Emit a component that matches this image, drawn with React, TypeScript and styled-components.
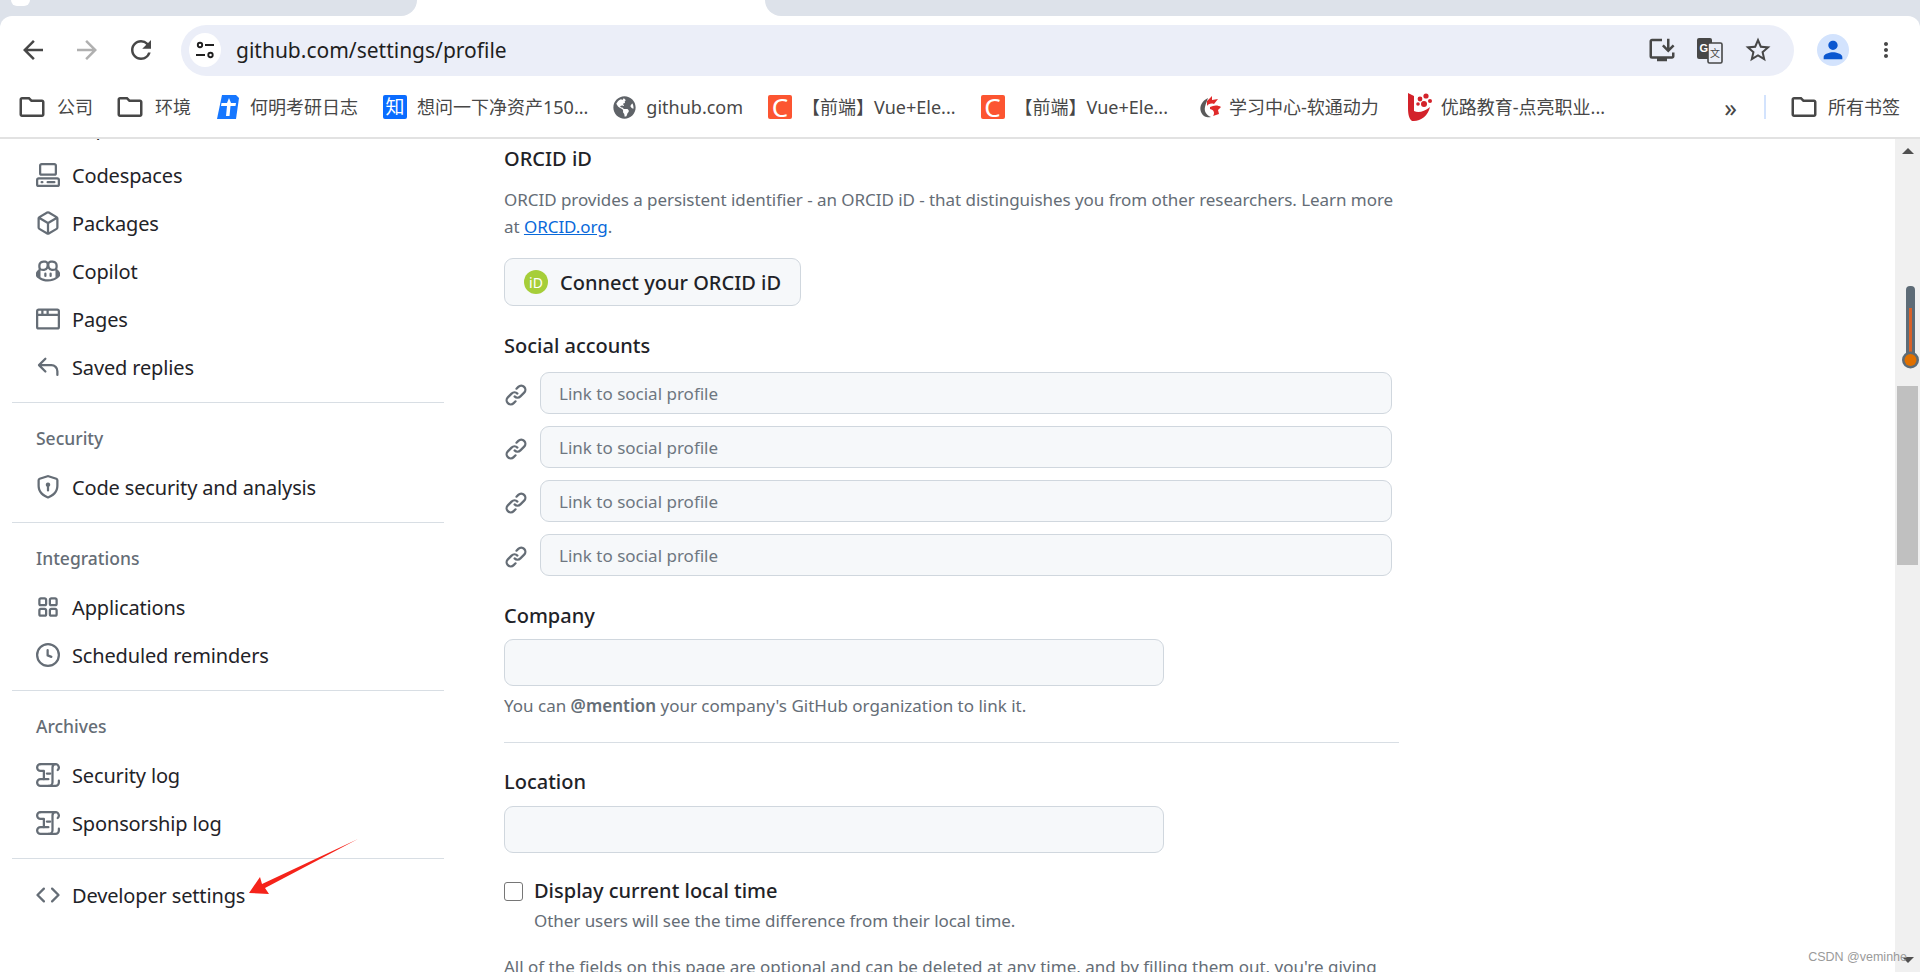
import React from 'react';
import styled, { createGlobalStyle } from 'styled-components';
import { GoRepo } from 'react-icons/go';
import {
     MdArrowBack,
     MdArrowForward,
     MdInstallDesktop,
     MdMoreVert,
     MdOutlineFolder,
     MdPerson,
     MdRefresh,
     MdStarBorder,
} from 'react-icons/md';
import { FaGlobeAmericas } from 'react-icons/fa';

const FONT = `'Noto Sans', 'Noto Sans CJK SC', sans-serif`;

const GlobalStyle = createGlobalStyle`
     html, body {
          margin: 0;
          padding: 0;
          background: #fff;
          overflow: hidden;
     }

     * {
          box-sizing: border-box;
     }

     body {
          font-family: ${FONT};
     }
`;

const Page = styled.div`
     position: relative;
     display: flex;
     flex-direction: column;
     width: 1920px;
     height: 972px;
     overflow: hidden;
`;

/* browser chrome */
const TabStrip = styled.div`
     display: flex;
     height: 16px;
     background: #fff;
`;

const TabGap = styled.div<{ $side: 'left' | 'right' }>`
     background: #dde2ea;
     ${({ $side }) =>
          $side === 'left'
               ? 'width: 417px; border-bottom-right-radius: 18px;'
               : 'flex: 1; margin-left: 348px; border-bottom-left-radius: 18px;'}
`;

const TabSliver = styled.div`
     width: 19px;
     height: 6px;
     margin-left: 11px;
     background: #fff;
     border-radius: 0 0 8px 8px;
`;

const ToolbarBack = styled.div`
     background: linear-gradient(90deg, #dde2ea 20px, transparent 20px, transparent 1890px, #dde2ea 1890px);
`;

const Toolbar = styled.div`
     display: flex;
     align-items: center;
     height: 68px;
     padding: 0 22px 0 6px;
     background: #fff;
     border-radius: 12px 12px 0 0;
`;

const NavButton = styled.div<{ $muted?: boolean }>`
     display: flex;
     align-items: center;
     justify-content: center;
     width: 54px;
     font-size: 30px;
     color: ${({ $muted }) => ($muted ? '#b0b0b0' : '#474747')};
`;

const AddressBar = styled.div`
     flex: 1;
     display: flex;
     align-items: center;
     gap: 15px;
     height: 51px;
     margin-left: 13px;
     padding: 0 21px 0 8px;
     background: #ebeef8;
     border-radius: 26px;
`;

const SiteChip = styled.div`
     display: flex;
     align-items: center;
     justify-content: center;
     width: 32px;
     height: 34px;
     border-radius: 50%;
     background: #fff;
     color: #1f1f1f;
`;

const Url = styled.span`
     flex: 1;
     font-size: 21px;
     color: #1f1f1f;
`;

const AddressActions = styled.div`
     display: flex;
     align-items: center;
     gap: 18px;
     font-size: 30px;
     color: #474747;

     svg {
          display: block;
     }
`;

const Avatar = styled.div`
     display: flex;
     align-items: center;
     justify-content: center;
     width: 32px;
     height: 32px;
     margin: 0 25px 0 23px;
     border-radius: 50%;
     background: #d3e3fd;
     font-size: 28px;
     color: #0b57d0;
`;

const MoreButton = styled.div`
     display: flex;
     justify-content: center;
     width: 24px;
     font-size: 30px;
     color: #474747;
`;

const BookmarkBar = styled.div`
     display: flex;
     align-items: center;
     gap: 25px;
     height: 55px;
     padding: 0 20px 7px 20px;
     background: #fff;
     border-bottom: 2px solid #e2e2e2;
`;

const Bookmark = styled.div<{ $iconGap?: number; $lead?: number }>`
     display: flex;
     align-items: center;
     gap: ${({ $iconGap }) => $iconGap ?? 10}px;
     margin-left: ${({ $lead }) => $lead ?? 0}px;
     font-size: 18px;
     line-height: 24px;
     color: #474747;
     white-space: nowrap;

     svg {
          display: block;
          flex: none;
     }
`;

const FolderIcon = styled(MdOutlineFolder)`
     font-size: 30px;
     margin: 0 -1px 0 -3px;
     color: #474747;
`;

const Favicon = styled.span<{ $bg: string; $size: number }>`
     display: flex;
     align-items: center;
     justify-content: center;
     width: 24px;
     height: 24px;
     border-radius: 2px;
     background: ${({ $bg }) => $bg};
     color: #fff;
     font-size: ${({ $size }) => $size}px;
     line-height: 1;
`;

const BookmarkEnd = styled.div`
     display: flex;
     align-items: center;
     margin-left: auto;
`;

const Chevrons = styled.span`
     font-size: 25px;
     line-height: 24px;
     color: #474747;
     margin-right: 27px;
`;

const BarDivider = styled.span`
     width: 2px;
     height: 24px;
     margin-right: 26px;
     background: #d3e3fd;
`;

/* page */
const Main = styled.div`
     flex: 1;
     display: flex;
     min-height: 0;
     overflow: hidden;
`;

const Sidebar = styled.nav`
     flex: none;
     width: 432px;
     margin: -35px 0 0 12px;
`;

const NavRow = styled.div`
     display: flex;
     align-items: center;
     gap: 12px;
     height: 48px;
     padding: 0 0 2px 24px;
     font-size: 20px;
     letter-spacing: -0.15px;
     color: #1f2328;

     svg {
          flex: none;
          width: 24px;
          height: 24px;
          color: #656d76;
     }
`;

const NavDivider = styled.div`
     height: 1px;
     margin-top: 10px;
     background: #d8dee4;
`;

const NavLabel = styled.div`
     padding: 22px 0 12px 24px;
     font-size: 17.5px;
     font-weight: 500;
     line-height: 27px;
     color: #656d76;
`;

const DevGroup = styled.div`
     margin-top: 13px;
`;

const Form = styled.div`
     flex: none;
     width: 895px;
     margin-left: 60px;
     padding-top: 5px;
`;

const FieldTitle = styled.div<{ $gap?: number }>`
     margin-top: ${({ $gap }) => $gap ?? 0}px;
     font-size: 20px;
     font-weight: 500;
     line-height: 30px;
     color: #1f2328;
`;

const Note = styled.p<{ $gap?: number; $tight?: boolean }>`
     margin: ${({ $gap }) => $gap ?? 0}px 0 0;
     font-size: 17px;
     line-height: 27px;
     letter-spacing: ${({ $tight }) => ($tight ? '-0.05px' : '0')};
     color: #656d76;
     white-space: nowrap;

     a {
          color: #0969da;
          text-decoration: underline;
     }

     strong {
          font-weight: 600;
     }
`;

const OrcidButton = styled.button`
     display: flex;
     align-items: center;
     gap: 12px;
     width: 297px;
     height: 48px;
     margin-top: 18px;
     padding: 0 0 0 19px;
     border: 1.5px solid #d0d7de;
     border-radius: 9px;
     background: #f6f8fa;
     font-family: ${FONT};
     font-size: 20px;
     font-weight: 500;
     color: #1f2328;
`;

const OrcidBadge = styled.span`
     display: flex;
     align-items: center;
     justify-content: center;
     width: 24px;
     height: 24px;
     border-radius: 50%;
     background: #a6ce39;
     color: #fff;
     font-size: 14px;
     font-weight: 400;
`;

const SocialList = styled.div`
     display: flex;
     flex-direction: column;
     gap: 12px;
     width: 888px;
     margin-top: 11px;
`;

const SocialRow = styled.div`
     display: flex;
     align-items: center;
     gap: 12px;

     svg {
          flex: none;
          width: 24px;
          height: 24px;
          margin-top: 3px;
          color: #656d76;
     }
`;

const TextInput = styled.input`
     display: block;
     flex: 1;
     height: 42px;
     padding: 0 18px;
     border: 1.5px solid #d0d7de;
     border-radius: 9px;
     background: #f6f8fa;
     font-family: ${FONT};
     font-size: 17px;

     &::placeholder {
          color: #6e7781;
          opacity: 1;
     }
`;

const WideInput = styled(TextInput)<{ $gap: number }>`
     width: 660px;
     height: 47px;
     margin-top: ${({ $gap }) => $gap}px;
`;

const Rule = styled.hr`
     width: 895px;
     height: 1px;
     margin: 23px 0 0;
     border: 0;
     background: #d8dee4;
`;

const CheckRow = styled.label`
     display: flex;
     align-items: center;
     gap: 11px;
     margin-top: 23px;
     font-size: 20px;
     font-weight: 500;
     line-height: 30px;
     color: #1f2328;
`;

const CheckBox = styled.input`
     appearance: none;
     width: 19px;
     height: 19px;
     margin: 0;
     border: 1.5px solid #767676;
     border-radius: 3px;
     background: #fff;
`;

const Indented = styled(Note)`
     padding-left: 30px;
`;

/* page scrollbar */
const ScrollTrack = styled.div`
     position: relative;
     flex: none;
     display: flex;
     flex-direction: column;
     align-items: center;
     width: 25px;
     margin-left: auto;
     background: #f0f0f0;
`;

const ScrollArrow = styled.span<{ $dir: 'up' | 'down' }>`
     width: 0;
     height: 0;
     border-left: 6px solid transparent;
     border-right: 6px solid transparent;
     ${({ $dir }) =>
          $dir === 'up'
               ? 'margin-top: 9px; border-bottom: 6px solid #505050;'
               : 'margin-top: 392px; border-top: 6px solid #505050;'}
`;

const ScrollThumb = styled.div`
     width: 21px;
     height: 179px;
     margin-top: 232px;
     background: #c0c0c0;
`;

const Thermometer = styled.svg`
     position: absolute;
     top: 147px;
     left: 6px;
`;

const Annotation = styled.svg`
     position: absolute;
     left: 240px;
     top: 830px;
`;

const Watermark = styled.span`
     position: absolute;
     right: 13px;
     bottom: 8px;
     font-family: 'Liberation Sans', sans-serif;
     font-size: 12.5px;
     color: #9a9a9a;
`;

// octicons, 16px artwork (the 16px strokes are heavier than what react-icons/go ships)
const Octicon: React.FC<{ d: string | string[] }> = ({ d }) => (
     <svg viewBox='0 0 16 16' fill='currentColor'>
          {([] as string[]).concat(d).map((p) => (
               <path key={p} d={p} />
          ))}
     </svg>
);

const ICONS = {
     codespaces: [
          'M0 11.25c0-.966.784-1.75 1.75-1.75h12.5c.966 0 1.75.784 1.75 1.75v3A1.75 1.75 0 0 1 14.25 16H1.75A1.75 1.75 0 0 1 0 14.25Zm2-9.5C2 .784 2.784 0 3.75 0h8.5C13.216 0 14 .784 14 1.75v5a1.75 1.75 0 0 1-1.75 1.75h-8.5A1.75 1.75 0 0 1 2 6.75Zm1.75-.25a.25.25 0 0 0-.25.25v5c0 .138.112.25.25.25h8.5a.25.25 0 0 0 .25-.25v-5a.25.25 0 0 0-.25-.25Zm-2 9.5a.25.25 0 0 0-.25.25v3c0 .138.112.25.25.25h12.5a.25.25 0 0 0 .25-.25v-3a.25.25 0 0 0-.25-.25Z',
          'M7 12.75a.75.75 0 0 1 .75-.75h4.5a.75.75 0 0 1 0 1.5h-4.5a.75.75 0 0 1-.75-.75Zm-4 0a.75.75 0 0 1 .75-.75h.5a.75.75 0 0 1 0 1.5h-.5a.75.75 0 0 1-.75-.75Z',
     ],
     packages:
          'm8.878.392 5.25 3.045c.54.314.872.89.872 1.514v6.098a1.75 1.75 0 0 1-.872 1.514l-5.25 3.045a1.75 1.75 0 0 1-1.756 0l-5.25-3.045A1.75 1.75 0 0 1 1 11.049V4.951c0-.624.332-1.201.872-1.514L7.122.392a1.75 1.75 0 0 1 1.756 0ZM7.875 1.69l-4.63 2.685L8 7.133l4.755-2.758-4.63-2.685a.248.248 0 0 0-.25 0ZM2.5 5.677v5.372c0 .09.047.171.125.216l4.625 2.683V8.432Zm6.25 8.271 4.625-2.683a.25.25 0 0 0 .125-.216V5.677L8.75 8.432Z',
     copilot: [
          'M7.998 15.035c-4.562 0-7.873-2.914-7.998-3.749V9.338c.085-.628.677-1.686 1.588-2.065.013-.07.024-.143.036-.218.029-.183.06-.384.126-.612-.201-.508-.254-1.084-.254-1.656 0-.87.128-1.769.693-2.484.579-.733 1.494-1.124 2.724-1.261 1.206-.134 2.262.034 2.944.765.05.053.096.108.139.165.044-.057.094-.112.143-.165.682-.731 1.738-.899 2.944-.765 1.23.137 2.145.528 2.724 1.261.566.715.693 1.614.693 2.484 0 .572-.053 1.148-.254 1.656.066.228.098.429.126.612.012.076.024.148.037.218.924.385 1.522 1.471 1.591 2.095v1.872c0 .766-3.351 3.795-8.002 3.795Zm0-1.485c2.28 0 4.584-1.11 5.002-1.433V7.862l-.023-.116c-.49.21-1.075.291-1.727.291-1.146 0-2.059-.327-2.71-.991A3.222 3.222 0 0 1 8 6.303a3.24 3.24 0 0 1-.544.743c-.65.664-1.563.991-2.71.991-.652 0-1.236-.081-1.727-.291l-.023.116v4.255c.419.323 2.722 1.433 5.002 1.433ZM6.762 2.83c-.193-.206-.637-.413-1.682-.297-1.019.113-1.479.404-1.713.7-.247.312-.369.789-.369 1.554 0 .793.129 1.171.308 1.371.162.181.519.379 1.442.379.853 0 1.339-.235 1.638-.54.315-.322.527-.827.617-1.553.117-.935-.037-1.395-.241-1.614Zm4.155-.297c-1.044-.116-1.488.091-1.681.297-.204.219-.359.679-.242 1.614.091.726.303 1.231.618 1.553.299.305.784.54 1.638.54.922 0 1.28-.198 1.442-.379.179-.2.308-.578.308-1.371 0-.765-.123-1.242-.37-1.554-.233-.296-.693-.587-1.713-.7Z',
          'M6.25 9.037a.75.75 0 0 1 .75.75v1.501a.75.75 0 0 1-1.5 0V9.787a.75.75 0 0 1 .75-.75Zm4.25.75v1.501a.75.75 0 0 1-1.5 0V9.787a.75.75 0 0 1 1.5 0Z',
     ],
     browser:
          'M0 2.75C0 1.784.784 1 1.75 1h12.5c.966 0 1.75.784 1.75 1.75v10.5A1.75 1.75 0 0 1 14.25 15H1.75A1.75 1.75 0 0 1 0 13.25ZM14.5 6h-13v7.25c0 .138.112.25.25.25h12.5a.25.25 0 0 0 .25-.25Zm-6-3.5v2h6v-1.75a.25.25 0 0 0-.25-.25ZM5 2.5v2h2v-2Zm-3.25 0a.25.25 0 0 0-.25.25V4.5h2v-2Z',
     reply: 'M6.78 1.97a.75.75 0 0 1 0 1.06L3.81 6h6.44A4.75 4.75 0 0 1 15 10.75v2.5a.75.75 0 0 1-1.5 0v-2.5a3.25 3.25 0 0 0-3.25-3.25H3.81l2.97 2.97a.749.749 0 0 1-.326 1.275.749.749 0 0 1-.734-.215L1.47 7.28a.75.75 0 0 1 0-1.06l4.25-4.25a.75.75 0 0 1 1.06 0Z',
     shield: 'm8.533.133 5.25 1.68A1.75 1.75 0 0 1 15 3.48V7c0 1.566-.32 3.182-1.303 4.682-.983 1.498-2.585 2.813-5.032 3.855a1.697 1.697 0 0 1-1.33 0c-2.447-1.042-4.049-2.357-5.032-3.855C1.32 10.182 1 8.566 1 7V3.48a1.75 1.75 0 0 1 1.217-1.667l5.25-1.68a1.748 1.748 0 0 1 1.066 0Zm-.61 1.429.001.001-5.25 1.68a.251.251 0 0 0-.174.237V7c0 1.36.275 2.666 1.057 3.859.784 1.194 2.121 2.342 4.366 3.298a.196.196 0 0 0 .154 0c2.245-.957 3.582-2.103 4.366-3.297C13.225 9.666 13.5 8.358 13.5 7V3.48a.25.25 0 0 0-.174-.238l-5.25-1.68a.25.25 0 0 0-.153 0ZM9.5 6.5c0 .536-.286 1.032-.75 1.3v2.45a.75.75 0 0 1-1.5 0V7.8A1.5 1.5 0 1 1 9.5 6.5Z',
     apps: 'M1.5 3.25c0-.966.784-1.75 1.75-1.75h2.5c.966 0 1.75.784 1.75 1.75v2.5A1.75 1.75 0 0 1 5.75 7.5h-2.5A1.75 1.75 0 0 1 1.5 5.75Zm7 0c0-.966.784-1.75 1.75-1.75h2.5c.966 0 1.75.784 1.75 1.75v2.5a1.75 1.75 0 0 1-1.75 1.75h-2.5A1.75 1.75 0 0 1 8.5 5.75Zm-7 7c0-.966.784-1.75 1.75-1.75h2.5c.966 0 1.75.784 1.75 1.75v2.5a1.75 1.75 0 0 1-1.75 1.75h-2.5a1.75 1.75 0 0 1-1.75-1.75Zm7 0c0-.966.784-1.75 1.75-1.75h2.5c.966 0 1.75.784 1.75 1.75v2.5a1.75 1.75 0 0 1-1.75 1.75h-2.5a1.75 1.75 0 0 1-1.75-1.75ZM3.25 3a.25.25 0 0 0-.25.25v2.5c0 .138.112.25.25.25h2.5A.25.25 0 0 0 6 5.75v-2.5A.25.25 0 0 0 5.75 3Zm7 0a.25.25 0 0 0-.25.25v2.5c0 .138.112.25.25.25h2.5a.25.25 0 0 0 .25-.25v-2.5a.25.25 0 0 0-.25-.25Zm-7 7a.25.25 0 0 0-.25.25v2.5c0 .138.112.25.25.25h2.5a.25.25 0 0 0 .25-.25v-2.5a.25.25 0 0 0-.25-.25Zm7 0a.25.25 0 0 0-.25.25v2.5c0 .138.112.25.25.25h2.5a.25.25 0 0 0 .25-.25v-2.5a.25.25 0 0 0-.25-.25Z',
     clock: 'M8 0a8 8 0 1 1 0 16A8 8 0 0 1 8 0ZM1.5 8a6.5 6.5 0 1 0 13 0 6.5 6.5 0 0 0-13 0Zm7-3.25v2.992l2.028.812a.75.75 0 0 1-.557 1.392l-2.5-1A.751.751 0 0 1 7 8.25v-3.5a.75.75 0 0 1 1.5 0Z',
     code: 'm11.28 3.22 4.25 4.25a.75.75 0 0 1 0 1.06l-4.25 4.25a.749.749 0 0 1-1.275-.326.749.749 0 0 1 .215-.734L13.94 8l-3.72-3.72a.749.749 0 0 1 .326-1.275.749.749 0 0 1 .734.215Zm-6.56 0a.751.751 0 0 1 1.042.018.751.751 0 0 1 .018 1.042L2.06 8l3.72 3.72a.749.749 0 0 1-.326 1.275.749.749 0 0 1-.734-.215L.47 8.53a.75.75 0 0 1 0-1.06Z',
     link: 'm7.775 3.275 1.25-1.25a3.5 3.5 0 1 1 4.95 4.95l-2.5 2.5a3.5 3.5 0 0 1-4.95 0 .751.751 0 0 1 .018-1.042.751.751 0 0 1 1.042-.018 1.998 1.998 0 0 0 2.83 0l2.5-2.5a2.002 2.002 0 0 0-2.83-2.83l-1.25 1.25a.751.751 0 0 1-1.042-.018.751.751 0 0 1-.018-1.042Zm-4.69 9.64a1.998 1.998 0 0 0 2.83 0l1.25-1.25a.751.751 0 0 1 1.042.018.751.751 0 0 1 .018 1.042l-1.25 1.25a3.5 3.5 0 1 1-4.95-4.95l2.5-2.5a3.5 3.5 0 0 1 4.95 0 .751.751 0 0 1-.018 1.042.751.751 0 0 1-1.042.018 1.998 1.998 0 0 0-2.83 0l-2.5 2.5a1.998 1.998 0 0 0 0 2.83Z',
};

const LogIcon = () => (
     <svg viewBox='0 0 16 16' fill='none' stroke='currentColor' strokeWidth='1.5' strokeLinecap='round' strokeLinejoin='round'>
          <path d='M3 .75H13a2.25 2.25 0 0 1 1.5 3.9' />
          <path d='M3 .75a2.25 2.25 0 0 0 0 4.5h2.25V10.75' />
          <path d='M8.25 10.75H3a2.25 2.25 0 0 0 0 4.5H13a2.25 2.25 0 0 0 2.25-2.25V11.75' />
          <path d='M13 .75c-1.3 0-2 1-2 2.25V12.75a2.5 2.5 0 0 1-2.5 2.5' />
          <path d='M7.25 7h2.25' />
     </svg>
);

const TuneIcon = () => (
     <svg width='24' height='24' viewBox='0 0 24 24' fill='none' stroke='currentColor' strokeWidth='2.2'>
          <circle cx='7' cy='7' r='2.2' strokeWidth='1.9' />
          <path d='M12 7h9M3 17h9' />
          <circle cx='17.5' cy='17' r='2.2' strokeWidth='1.9' />
     </svg>
);

const XuetangLogo = () => (
     <svg width='24' height='24' viewBox='0 0 24 24'>
          <path d='M10 3 C4 6 1 11 3 17 C5 22 10 23 13 22 C8 20 6 16 7 12 C8 8 9 6 10 3Z' fill='#5a5a5a' />
          <path d='M9 6 L14 1 L14 5 L20 4 L16 9 C13 8 10 9 9 11Z' fill='#e02a2a' />
          <path d='M12 12 C16 10 20 10 23 12 L20 15 L21 19 L15 21 C17 18 16 15 12 14Z' fill='#e02a2a' />
     </svg>
);

const YouluLogo = () => (
     <svg width='28' height='30' viewBox='0 0 28 30'>
          <path d='M2 1 L8 4 L8 19 C12 21 18 20 24 15 C22 24 14 30 6 29 C3 27 2 22 2 16Z' fill='#d3222a' />
          <circle cx='14' cy='7' r='2.4' fill='#d3222a' />
          <circle cx='20' cy='4' r='2.6' fill='#d3222a' />
          <circle cx='24' cy='9' r='2' fill='#d3222a' />
          <circle cx='18' cy='12' r='3' fill='#d3222a' />
          <circle cx='12' cy='12' r='1.8' fill='#d3222a' />
     </svg>
);

const JianLogo = () => (
     <svg width='24' height='26' viewBox='0 0 24 26'>
          <path d='M6 1 L20 1 L23 4 L20 25 L1 25Z' fill='#1677ff' />
          <path d='M13 4 L15 9 L20 9 L19.5 12 L14.5 12 L13.5 22 L10 22 L11 12 L5 12 L5.5 9 L11 9Z' fill='#fff' />
     </svg>
);

const TranslateIcon = () => (
     <svg width='30' height='30' viewBox='0 0 30 30'>
          <rect x='2' y='3' width='15' height='21' rx='2' fill='#474747' />
          <rect x='13' y='8' width='14' height='20' rx='1.5' fill='#ebeef8' stroke='#474747' strokeWidth='1.6' />
          <text x='4.5' y='17' fontSize='11' fontWeight='700' fontFamily='Liberation Sans' fill='#fff'>
               G
          </text>
          <text x='15' y='22' fontSize='10' fontFamily='Noto Sans CJK SC' fill='#474747'>
               文
          </text>
     </svg>
);

const App: React.FC = () => {
     return (
          <Page>
               <GlobalStyle />

               <TabStrip>
                    <TabGap $side='left'>
                         <TabSliver />
                    </TabGap>
                    <TabGap $side='right' />
               </TabStrip>

               <ToolbarBack>
                    <Toolbar>
                         <NavButton>
                              <MdArrowBack />
                         </NavButton>
                         <NavButton $muted>
                              <MdArrowForward />
                         </NavButton>
                         <NavButton>
                              <MdRefresh />
                         </NavButton>
                         <AddressBar>
                              <SiteChip>
                                   <TuneIcon />
                              </SiteChip>
                              <Url>github.com/settings/profile</Url>
                              <AddressActions>
                                   <MdInstallDesktop />
                                   <TranslateIcon />
                                   <MdStarBorder />
                              </AddressActions>
                         </AddressBar>
                         <Avatar>
                              <MdPerson />
                         </Avatar>
                         <MoreButton>
                              <MdMoreVert />
                         </MoreButton>
                    </Toolbar>
               </ToolbarBack>

               <BookmarkBar>
                    <Bookmark $iconGap={11}>
                         <FolderIcon />
                         公司
                    </Bookmark>
                    <Bookmark $iconGap={11}>
                         <FolderIcon />
                         环境
                    </Bookmark>
                    <Bookmark>
                         <JianLogo />
                         何明考研日志
                    </Bookmark>
                    <Bookmark>
                         <Favicon $bg='#0a6cff' $size={19}>
                              知
                         </Favicon>
                         想问一下净资产150...
                    </Bookmark>
                    <Bookmark>
                         <FaGlobeAmericas size={23} color='#5f6368' />
                         github.com
                    </Bookmark>
                    <Bookmark>
                         <Favicon $bg='#fc5531' $size={26}>
                              C
                         </Favicon>
                         【前端】Vue+Ele...
                    </Bookmark>
                    <Bookmark>
                         <Favicon $bg='#fc5531' $size={26}>
                              C
                         </Favicon>
                         【前端】Vue+Ele...
                    </Bookmark>
                    <Bookmark $iconGap={7} $lead={5}>
                         <XuetangLogo />
                         学习中心-软通动力
                    </Bookmark>
                    <Bookmark $iconGap={7} $lead={2}>
                         <YouluLogo />
                         优路教育-点亮职业...
                    </Bookmark>
                    <BookmarkEnd>
                         <Chevrons>»</Chevrons>
                         <BarDivider />
                         <Bookmark>
                              <FolderIcon />
                              所有书签
                         </Bookmark>
                    </BookmarkEnd>
               </BookmarkBar>

               <Main>
                    <Sidebar>
                         <NavRow>
                              <GoRepo />
                              Repositories
                         </NavRow>
                         <NavRow>
                              <Octicon d={ICONS.codespaces} />
                              Codespaces
                         </NavRow>
                         <NavRow>
                              <Octicon d={ICONS.packages} />
                              Packages
                         </NavRow>
                         <NavRow>
                              <Octicon d={ICONS.copilot} />
                              Copilot
                         </NavRow>
                         <NavRow>
                              <Octicon d={ICONS.browser} />
                              Pages
                         </NavRow>
                         <NavRow>
                              <Octicon d={ICONS.reply} />
                              Saved replies
                         </NavRow>
                         <NavDivider />

                         <NavLabel>Security</NavLabel>
                         <NavRow>
                              <Octicon d={ICONS.shield} />
                              Code security and analysis
                         </NavRow>
                         <NavDivider />

                         <NavLabel>Integrations</NavLabel>
                         <NavRow>
                              <Octicon d={ICONS.apps} />
                              Applications
                         </NavRow>
                         <NavRow>
                              <Octicon d={ICONS.clock} />
                              Scheduled reminders
                         </NavRow>
                         <NavDivider />

                         <NavLabel>Archives</NavLabel>
                         <NavRow>
                              <LogIcon />
                              Security log
                         </NavRow>
                         <NavRow>
                              <LogIcon />
                              Sponsorship log
                         </NavRow>
                         <NavDivider />

                         <DevGroup>
                              <NavRow>
                                   <Octicon d={ICONS.code} />
                                   Developer settings
                              </NavRow>
                         </DevGroup>
                    </Sidebar>

                    <Form>
                         <FieldTitle>ORCID iD</FieldTitle>
                         <Note $gap={12} $tight>
                              ORCID provides a persistent identifier - an ORCID iD - that distinguishes you from other researchers. Learn more
                              <br />
                              at <a href='#orcid'>ORCID.org</a>.
                         </Note>
                         <OrcidButton>
                              <OrcidBadge>iD</OrcidBadge>
                              Connect your ORCID iD
                         </OrcidButton>

                         <FieldTitle $gap={25}>Social accounts</FieldTitle>
                         <SocialList>
                              {[0, 1, 2, 3].map((i) => (
                                   <SocialRow key={i}>
                                        <Octicon d={ICONS.link} />
                                        <TextInput placeholder='Link to social profile' />
                                   </SocialRow>
                              ))}
                         </SocialList>

                         <FieldTitle $gap={25}>Company</FieldTitle>
                         <WideInput $gap={8} />
                         <Note $gap={6}>
                              You can <strong>@mention</strong> your company's GitHub organization to link it.
                         </Note>
                         <Rule />

                         <FieldTitle $gap={24}>Location</FieldTitle>
                         <WideInput $gap={9} />
                         <CheckRow>
                              <CheckBox type='checkbox' />
                              Display current local time
                         </CheckRow>
                         <Indented $gap={1} $tight>
                              Other users will see the time difference from their local time.
                         </Indented>
                         <Note $gap={19}>
                              All of the fields on this page are optional and can be deleted at any time, and by filling them out, you're giving
                         </Note>
                    </Form>

                    <ScrollTrack>
                         <ScrollArrow $dir='up' />
                         <ScrollThumb />
                         <ScrollArrow $dir='down' />
                         <Thermometer width='19' height='84' viewBox='0 0 19 84'>
                              <rect x='5' y='0' width='9' height='72' rx='4' fill='#5d6b76' />
                              <rect x='8' y='22' width='3' height='50' fill='#d8622a' />
                              <circle cx='9.5' cy='74' r='8.5' fill='#5d6b76' />
                              <circle cx='9.5' cy='74' r='6' fill='#e07000' />
                         </Thermometer>
                    </ScrollTrack>
               </Main>

               <Annotation width='125' height='70' viewBox='240 830 125 70'>
                    <polygon points='249,893 260,877 262,884 358,839 265,888 269,894' fill='#f5231a' />
               </Annotation>
               <Watermark>CSDN @veminhe</Watermark>
          </Page>
     );
};

export default App;
